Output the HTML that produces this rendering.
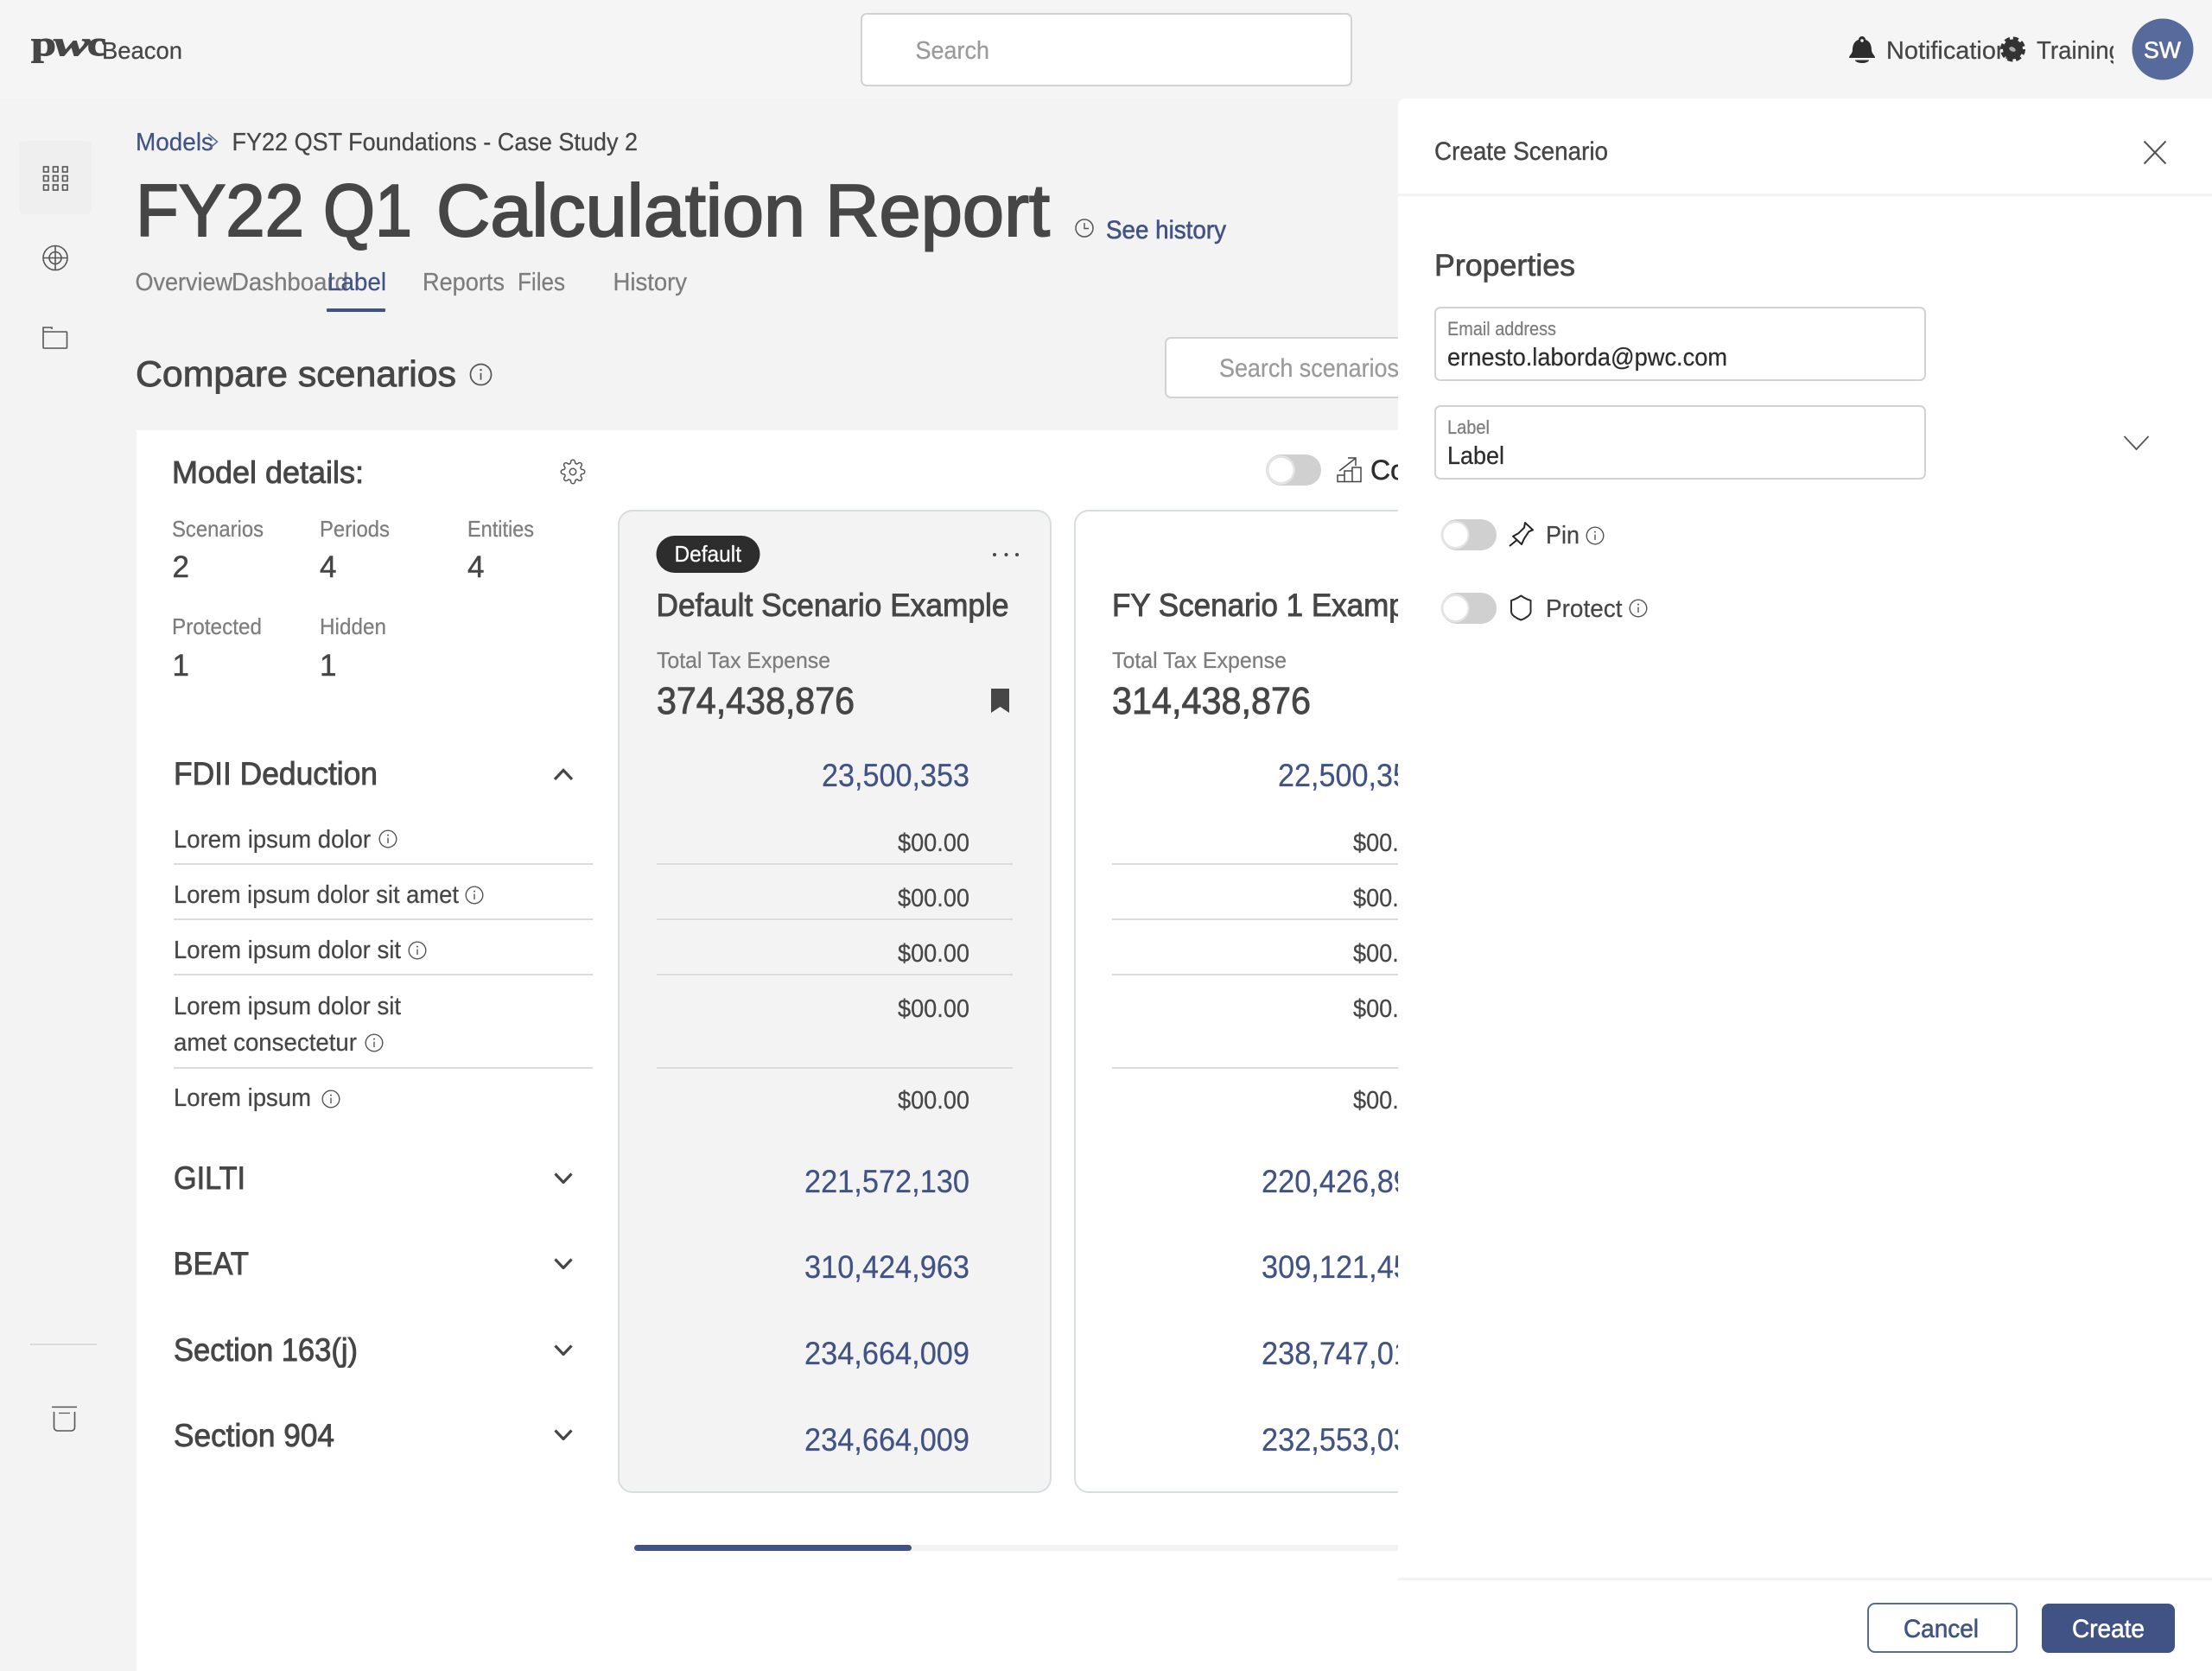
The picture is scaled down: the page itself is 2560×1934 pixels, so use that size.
<!DOCTYPE html>
<html lang="en"><head><meta charset="utf-8"><title>FY22 Q1 Calculation Report</title>
<style>
html,body{margin:0;padding:0;width:2560px;height:1934px;overflow:hidden;background:#f3f3f3}
svg{display:block}
text{font-family:"Liberation Sans",sans-serif;fill:#464646;stroke:#464646;stroke-width:.25}
.g{fill:#7d7d7d;stroke:#7d7d7d}.b{fill:#415385;stroke:#415385}.d{fill:#2d2d2d;stroke:#2d2d2d}.w{fill:#fff;stroke:#fff}.p{fill:#9a9a9a;stroke:#9a9a9a}
.m{stroke-width:.9}
.mb{stroke-width:.6}
.ln{stroke:#dcdcdc;stroke-width:2}
.ic{fill:none;stroke:#555;stroke-width:1.6}
.ch{fill:none;stroke:#464646;stroke-width:3.2}
.t{stroke-width:2}
.lg{font-family:"Liberation Serif",serif;font-weight:700;stroke-width:.9}
</style></head><body>
<svg xmlns="http://www.w3.org/2000/svg" width="2560" height="1934" viewBox="0 0 2560 1934">
<defs>
<symbol id="i" viewBox="0 0 22 22"><circle cx="11" cy="11" r="9.8" fill="none" stroke="#555" stroke-width="1.4"/><path d="M11 9.6V16" stroke="#555" stroke-width="1.4"/><circle cx="11" cy="6.6" r="1" fill="#555"/></symbol>
<symbol id="dn" viewBox="0 0 22 13"><path d="M1.5 1.5L11 11.5L20.5 1.5" fill="none" stroke="#464646" stroke-width="3.2"/></symbol>
<clipPath id="tr"><rect x="2340" y="30" width="106" height="50"/></clipPath>
</defs>

<rect width="2560" height="1934" fill="#f3f3f3"/>
<rect width="2560" height="114" fill="#f5f5f5"/>

<!-- Top bar -->
<text x="36" y="64" font-size="40" class="lg" textLength="29" lengthAdjust="spacingAndGlyphs">p</text>
<text x="62" y="64" font-size="40" class="lg" font-style="italic" textLength="42" lengthAdjust="spacingAndGlyphs">w</text>
<text x="101" y="64" font-size="40" class="lg" textLength="22" lengthAdjust="spacingAndGlyphs">c</text>
<text x="118" y="68" font-size="28" textLength="93" lengthAdjust="spacingAndGlyphs">Beacon</text>
<rect x="997" y="16" width="567" height="83" rx="6" fill="#fff" stroke="#d2d2d2" stroke-width="2"/>
<text x="1059.500" y="68" font-size="29" class="p" textLength="85.500" lengthAdjust="spacingAndGlyphs">Search</text>
<path d="M2155 42a4 4 0 0 1 4 4c6 2 7 8 7 12c0 4 4 6 4 9h-30c0-3 4-5 4-9c0-4 1-10 7-12a4 4 0 0 1 4-4z" fill="#2d2d2d"/>
<path d="M2147 69.500h16a8 3.500 0 0 1-16 0z" fill="#2d2d2d"/>
<circle cx="2155" cy="47" r="1.800" fill="#f5f5f5"/>
<text x="2183" y="68" font-size="29" textLength="143" lengthAdjust="spacingAndGlyphs">Notification</text>
<circle cx="2329.500" cy="57" r="11.500" fill="#333"/>
<circle cx="2329.500" cy="57" r="12" fill="none" stroke="#333" stroke-width="5" stroke-dasharray="5.800 3.620"/>
<ellipse cx="2329" cy="57" rx="4" ry="2.500" fill="#aaa" transform="rotate(25 2329 57)"/>
<text x="2357" y="68" font-size="29" clip-path="url(#tr)" textLength="99" lengthAdjust="spacingAndGlyphs">Training</text>
<circle cx="2503" cy="57" r="35.500" fill="#566a9b"/>
<text x="2481" y="67" font-size="27" class="w" style="stroke-width:.6" textLength="43" lengthAdjust="spacingAndGlyphs">SW</text>

<!-- Sidebar -->
<rect x="22" y="163" width="84" height="85" rx="6" fill="#efefef"/>
<g class="ic">
<rect x="50.500" y="193" width="5.500" height="6"/><rect x="61.500" y="193" width="5.500" height="6"/><rect x="72.500" y="193" width="5.500" height="6"/>
<rect x="50.500" y="203.500" width="5.500" height="6"/><rect x="61.500" y="203.500" width="5.500" height="6"/><rect x="72.500" y="203.500" width="5.500" height="6"/>
<rect x="50.500" y="214" width="5.500" height="6"/><rect x="61.500" y="214" width="5.500" height="6"/><rect x="72.500" y="214" width="5.500" height="6"/>
<circle cx="64" cy="298.500" r="14"/><circle cx="64" cy="298.500" r="7"/><path d="M50 298.500H78M64 284.500V312.500"/>
<rect x="50" y="384" width="27.500" height="19" rx="1"/><path d="M50 384V379H60V381"/>
<path d="M60 1628.500H89M62.500 1634V1652a4 4 0 0 0 4 4H82.500a4 4 0 0 0 4-4V1634"/>
<path d="M68 1635.500H81" stroke-width="1.200"/>
</g>
<line x1="35" y1="1556" x2="112" y2="1556" class="ln"/>

<!-- Header content -->
<text x="157" y="174" font-size="29" class="b" textLength="90" lengthAdjust="spacingAndGlyphs">Models</text>
<path d="M241 155L251.500 164L241 173" fill="none" stroke="#5f6f98" stroke-width="1.600"/>
<text x="268.500" y="174" font-size="29" textLength="469.500" lengthAdjust="spacingAndGlyphs">FY22 QST Foundations - Case Study 2</text>
<text x="157" y="273" font-size="85" class="t" textLength="195" lengthAdjust="spacingAndGlyphs">FY22</text>
<text x="374" y="273" font-size="85" class="t" textLength="103" lengthAdjust="spacingAndGlyphs">Q1</text>
<text x="505" y="273" font-size="85" class="t" textLength="427" lengthAdjust="spacingAndGlyphs">Calculation</text>
<text x="955" y="273" font-size="85" class="t" textLength="260" lengthAdjust="spacingAndGlyphs">Report</text>
<circle cx="1255" cy="264" r="10" fill="none" stroke="#555" stroke-width="1.500"/><path d="M1255 258V264.500H1260" fill="none" stroke="#555" stroke-width="1.400"/>
<text x="1280" y="276" font-size="30" class="b mb" textLength="139" lengthAdjust="spacingAndGlyphs">See history</text>
<text x="156.500" y="336" font-size="29" class="g" textLength="112.500" lengthAdjust="spacingAndGlyphs">Overview</text>
<text x="268" y="336" font-size="29" class="g" textLength="135" lengthAdjust="spacingAndGlyphs">Dashboard</text>
<text x="379" y="336" font-size="29" class="b" textLength="68" lengthAdjust="spacingAndGlyphs">Label</text>
<text x="489" y="336" font-size="29" class="g" textLength="95" lengthAdjust="spacingAndGlyphs">Reports</text>
<text x="599" y="336" font-size="29" class="g" textLength="55" lengthAdjust="spacingAndGlyphs">Files</text>
<text x="709.500" y="336" font-size="29" class="g" textLength="85.500" lengthAdjust="spacingAndGlyphs">History</text>
<rect x="378" y="357" width="68" height="4" rx="1" fill="#415385"/>
<text x="157" y="447" font-size="42" class="m" textLength="371" lengthAdjust="spacingAndGlyphs">Compare scenarios</text>
<use href="#i" x="543" y="420" width="27" height="27"/>
<rect x="1349" y="391" width="400" height="69" rx="6" fill="#fff" stroke="#d2d2d2" stroke-width="2"/>
<text x="1411" y="436" font-size="30" class="p" textLength="208" lengthAdjust="spacingAndGlyphs">Search scenarios</text>

<!-- Main white card -->
<rect x="158" y="498" width="1500" height="1436" fill="#fff"/>
<text x="199" y="559" font-size="36" class="m" textLength="222" lengthAdjust="spacingAndGlyphs">Model details:</text>
<g transform="translate(648 531) scale(1.250)" fill="none" stroke="#555" stroke-width="1.200"><circle cx="12" cy="12" r="3"/><path d="M19.400 15a1.650 1.650 0 0 0 .33 1.820l.06.06a2 2 0 0 1 0 2.830 2 2 0 0 1-2.830 0l-.06-.06a1.650 1.650 0 0 0-1.820-.33 1.650 1.650 0 0 0-1 1.510V21a2 2 0 0 1-2 2 2 2 0 0 1-2-2v-.09A1.650 1.650 0 0 0 9 19.400a1.650 1.650 0 0 0-1.820.33l-.06.06a2 2 0 0 1-2.830 0 2 2 0 0 1 0-2.830l.06-.06a1.650 1.650 0 0 0 .33-1.820 1.650 1.650 0 0 0-1.510-1H3a2 2 0 0 1-2-2 2 2 0 0 1 2-2h.09A1.650 1.650 0 0 0 4.600 9a1.650 1.650 0 0 0-.33-1.820l-.06-.06a2 2 0 0 1 0-2.830 2 2 0 0 1 2.830 0l.06.06a1.650 1.650 0 0 0 1.820.33H9a1.650 1.650 0 0 0 1-1.510V3a2 2 0 0 1 2-2 2 2 0 0 1 2 2v.09a1.650 1.650 0 0 0 1 1.510 1.650 1.650 0 0 0 1.820-.33l.06-.06a2 2 0 0 1 2.830 0 2 2 0 0 1 0 2.830l-.06.06a1.650 1.650 0 0 0-.33 1.820V9a1.650 1.650 0 0 0 1.510 1H21a2 2 0 0 1 2 2 2 2 0 0 1-2 2h-.09a1.650 1.650 0 0 0-1.510 1z"/></g>

<text x="199" y="621" font-size="26" class="g" textLength="106" lengthAdjust="spacingAndGlyphs">Scenarios</text>
<text x="370" y="621" font-size="26" class="g" textLength="81" lengthAdjust="spacingAndGlyphs">Periods</text>
<text x="541" y="621" font-size="26" class="g" textLength="77" lengthAdjust="spacingAndGlyphs">Entities</text>
<text x="199.500" y="668" font-size="35" style="stroke-width:.5">2</text><text x="370" y="668" font-size="35" style="stroke-width:.5">4</text><text x="541" y="668" font-size="35" style="stroke-width:.5">4</text>
<text x="199" y="734" font-size="26" class="g" textLength="104" lengthAdjust="spacingAndGlyphs">Protected</text>
<text x="370" y="734" font-size="26" class="g" textLength="77" lengthAdjust="spacingAndGlyphs">Hidden</text>
<text x="199.500" y="782" font-size="35" style="stroke-width:.5">1</text><text x="370" y="782" font-size="35" style="stroke-width:.5">1</text>

<!-- Left column rows -->
<text x="201" y="908" font-size="37" class="m" textLength="236" lengthAdjust="spacingAndGlyphs">FDII Deduction</text>
<path d="M642 902L652 891.500L662 902" class="ch"/>
<text x="201" y="981" font-size="29" textLength="228" lengthAdjust="spacingAndGlyphs">Lorem ipsum dolor</text><use href="#i" x="438" y="960" width="22" height="22"/>
<line x1="201" y1="1000" x2="686" y2="1000" class="ln"/>
<text x="201" y="1045" font-size="29" textLength="330" lengthAdjust="spacingAndGlyphs">Lorem ipsum dolor sit amet</text><use href="#i" x="538" y="1025" width="22" height="22"/>
<line x1="201" y1="1064" x2="686" y2="1064" class="ln"/>
<text x="201" y="1109" font-size="29" textLength="263" lengthAdjust="spacingAndGlyphs">Lorem ipsum dolor sit</text><use href="#i" x="472" y="1089" width="22" height="22"/>
<line x1="201" y1="1128" x2="686" y2="1128" class="ln"/>
<text x="201" y="1174" font-size="29" textLength="263" lengthAdjust="spacingAndGlyphs">Lorem ipsum dolor sit</text>
<text x="201" y="1216" font-size="29" textLength="212" lengthAdjust="spacingAndGlyphs">amet consectetur</text><use href="#i" x="422" y="1196" width="22" height="22"/>
<line x1="201" y1="1236" x2="686" y2="1236" class="ln"/>
<text x="201" y="1280" font-size="29" textLength="159" lengthAdjust="spacingAndGlyphs">Lorem ipsum</text><use href="#i" x="372" y="1261" width="22" height="22"/>

<text x="201" y="1376" font-size="37" class="m" textLength="83" lengthAdjust="spacingAndGlyphs">GILTI</text><use href="#dn" x="641" y="1357" width="22" height="13"/>
<text x="200.500" y="1475" font-size="37" class="m" textLength="87.500" lengthAdjust="spacingAndGlyphs">BEAT</text><use href="#dn" x="641" y="1456" width="22" height="13"/>
<text x="201" y="1575" font-size="37" class="m" textLength="213" lengthAdjust="spacingAndGlyphs">Section 163(j)</text><use href="#dn" x="641" y="1556" width="22" height="13"/>
<text x="201" y="1674" font-size="37" class="m" textLength="186" lengthAdjust="spacingAndGlyphs">Section 904</text><use href="#dn" x="641" y="1654" width="22" height="13"/>

<!-- Default card -->
<rect x="716" y="591" width="500" height="1136" rx="16" fill="#f3f3f3" stroke="#d8dde0" stroke-width="2"/>
<rect x="759.500" y="620" width="120" height="43" rx="21.500" fill="#2d2d2d"/>
<text x="780.500" y="650" font-size="26" class="w" textLength="77.500" lengthAdjust="spacingAndGlyphs">Default</text>
<circle cx="1151" cy="642" r="2" fill="#464646"/><circle cx="1164.500" cy="642" r="2" fill="#464646"/><circle cx="1177" cy="642" r="2" fill="#464646"/>
<text x="759.500" y="713" font-size="37" class="m" textLength="408" lengthAdjust="spacingAndGlyphs">Default Scenario Example</text>
<text x="760" y="773" font-size="26" class="g" textLength="201" lengthAdjust="spacingAndGlyphs">Total Tax Expense</text>
<text x="760" y="826" font-size="44" class="m" textLength="229" lengthAdjust="spacingAndGlyphs">374,438,876</text>
<path d="M1147 797H1168V825L1157.500 818L1147 825z" fill="#464646"/>
<text x="951" y="910" font-size="37" class="b" textLength="171" lengthAdjust="spacingAndGlyphs">23,500,353</text>
<text x="1039" y="985" font-size="29" textLength="83" lengthAdjust="spacingAndGlyphs">$00.00</text>
<line x1="760" y1="1000" x2="1172" y2="1000" class="ln"/>
<text x="1039" y="1049" font-size="29" textLength="83" lengthAdjust="spacingAndGlyphs">$00.00</text>
<line x1="760" y1="1064" x2="1172" y2="1064" class="ln"/>
<text x="1039" y="1113" font-size="29" textLength="83" lengthAdjust="spacingAndGlyphs">$00.00</text>
<line x1="760" y1="1128" x2="1172" y2="1128" class="ln"/>
<text x="1039" y="1177" font-size="29" textLength="83" lengthAdjust="spacingAndGlyphs">$00.00</text>
<line x1="760" y1="1236" x2="1172" y2="1236" class="ln"/>
<text x="1039" y="1283" font-size="29" textLength="83" lengthAdjust="spacingAndGlyphs">$00.00</text>
<text x="931" y="1380" font-size="37" class="b" textLength="191" lengthAdjust="spacingAndGlyphs">221,572,130</text>
<text x="931" y="1479" font-size="37" class="b" textLength="191" lengthAdjust="spacingAndGlyphs">310,424,963</text>
<text x="931" y="1579" font-size="37" class="b" textLength="191" lengthAdjust="spacingAndGlyphs">234,664,009</text>
<text x="931" y="1679" font-size="37" class="b" textLength="191" lengthAdjust="spacingAndGlyphs">234,664,009</text>

<!-- Second card -->
<rect x="1244" y="591" width="500" height="1136" rx="16" fill="#fff" stroke="#d8dde0" stroke-width="2"/>
<text x="1287" y="713" font-size="37" class="m" textLength="367" lengthAdjust="spacingAndGlyphs">FY Scenario 1 Example</text>
<text x="1287" y="773" font-size="26" class="g" textLength="202" lengthAdjust="spacingAndGlyphs">Total Tax Expense</text>
<text x="1287" y="826" font-size="44" class="m" textLength="230" lengthAdjust="spacingAndGlyphs">314,438,876</text>
<text x="1479" y="910" font-size="37" class="b" textLength="171" lengthAdjust="spacingAndGlyphs">22,500,353</text>
<text x="1566" y="985" font-size="29" textLength="83" lengthAdjust="spacingAndGlyphs">$00.00</text>
<line x1="1287" y1="1000" x2="1650" y2="1000" class="ln"/>
<text x="1566" y="1049" font-size="29" textLength="83" lengthAdjust="spacingAndGlyphs">$00.00</text>
<line x1="1287" y1="1064" x2="1650" y2="1064" class="ln"/>
<text x="1566" y="1113" font-size="29" textLength="83" lengthAdjust="spacingAndGlyphs">$00.00</text>
<line x1="1287" y1="1128" x2="1650" y2="1128" class="ln"/>
<text x="1566" y="1177" font-size="29" textLength="83" lengthAdjust="spacingAndGlyphs">$00.00</text>
<line x1="1287" y1="1236" x2="1650" y2="1236" class="ln"/>
<text x="1566" y="1283" font-size="29" textLength="83" lengthAdjust="spacingAndGlyphs">$00.00</text>
<text x="1460" y="1380" font-size="37" class="b" textLength="191" lengthAdjust="spacingAndGlyphs">220,426,890</text>
<text x="1460" y="1479" font-size="37" class="b" textLength="191" lengthAdjust="spacingAndGlyphs">309,121,450</text>
<text x="1460" y="1579" font-size="37" class="b" textLength="191" lengthAdjust="spacingAndGlyphs">238,747,010</text>
<text x="1460" y="1679" font-size="37" class="b" textLength="191" lengthAdjust="spacingAndGlyphs">232,553,030</text>

<!-- Compare toggle -->
<rect x="1465" y="526" width="64" height="36" rx="18" fill="#d0d0d0"/>
<circle cx="1482" cy="544" r="17" fill="#e4e4e4"/>
<circle cx="1482.500" cy="544" r="14" fill="#fff"/>
<path d="M1548 550H1556V557.500H1548zM1556 545H1565V557.500H1556zM1565 541H1575V557.500H1565zM1550 545L1568 531M1560 530H1569V539" fill="none" stroke="#464646" stroke-width="1.500"/>
<text x="1586" y="555" font-size="32" class="d" style="stroke-width:.5">Compare</text>

<!-- Scrollbar -->
<rect x="734" y="1788" width="900" height="7" rx="3" fill="#f3f3f6"/>
<rect x="734" y="1788" width="321" height="7" rx="3.500" fill="#415385"/>

<!-- Panel -->
<path d="M1618 122a8 8 0 0 1 8-8H2560V1934H1618z" fill="#fff"/>
<text x="1660" y="185" font-size="30" style="stroke-width:.4" textLength="201" lengthAdjust="spacingAndGlyphs">Create Scenario</text>
<path d="M2481.500 163.500L2506.500 189.500M2506.500 163.500L2481.500 189.500" fill="none" stroke="#555" stroke-width="2"/>
<rect x="1618" y="224" width="942" height="3" fill="#f3f3f3"/>
<text x="1660" y="319" font-size="35" class="m" style="stroke-width:.7" textLength="163" lengthAdjust="spacingAndGlyphs">Properties</text>

<rect x="1661" y="356" width="567" height="84" rx="6" fill="#fff" stroke="#d2d2d2" stroke-width="2"/>
<text x="1675" y="388" font-size="22" class="g" textLength="126" lengthAdjust="spacingAndGlyphs">Email address</text>
<text x="1675" y="423" font-size="29" class="d" textLength="324" lengthAdjust="spacingAndGlyphs">ernesto.laborda@pwc.com</text>
<rect x="1661" y="470" width="567" height="84" rx="6" fill="#fff" stroke="#d2d2d2" stroke-width="2"/>
<text x="1675" y="502" font-size="22" class="g" textLength="49" lengthAdjust="spacingAndGlyphs">Label</text>
<text x="1675" y="537" font-size="29" class="d" textLength="66" lengthAdjust="spacingAndGlyphs">Label</text>
<path d="M2458.500 505L2472.500 520L2486.500 505" fill="none" stroke="#555" stroke-width="1.800"/>

<rect x="1668" y="601" width="64" height="36" rx="18" fill="#d0d0d0"/>
<circle cx="1684" cy="619" r="16.500" fill="#e4e4e4"/>
<circle cx="1684.500" cy="619" r="14" fill="#fff"/>
<path d="M1765 605L1774 613.300L1769.300 615.300L1764 623.300L1761 630L1751 620.700L1757.300 617.300L1764 610.700ZM1755 625.500L1747 632" fill="none" stroke="#222" stroke-width="2" stroke-linejoin="round"/>
<text x="1789" y="629" font-size="29" textLength="39" lengthAdjust="spacingAndGlyphs">Pin</text>
<use href="#i" x="1835" y="609" width="22" height="22"/>

<rect x="1668" y="686" width="64" height="36" rx="18" fill="#d0d0d0"/>
<circle cx="1684" cy="704" r="16.500" fill="#e4e4e4"/>
<circle cx="1684.500" cy="704" r="14" fill="#fff"/>
<path d="M1760.300 689.500C1764 692 1768 694 1771.500 695V708C1771.500 712 1765 716 1760.300 717.500C1755.500 716 1749 712 1749 708V695C1752.500 694 1756.500 692 1760.300 689.500Z" fill="none" stroke="#2d2d2d" stroke-width="2" stroke-linejoin="round"/>
<text x="1789" y="714" font-size="29" textLength="88.500" lengthAdjust="spacingAndGlyphs">Protect</text>
<use href="#i" x="1885" y="693" width="22" height="22"/>

<rect x="1618" y="1826" width="942" height="3" fill="#f3f3f3"/>
<rect x="2162" y="1856" width="172" height="56" rx="8" fill="#fff" stroke="#566a9b" stroke-width="2"/>
<text x="2203" y="1895" font-size="30" class="b mb" textLength="87" lengthAdjust="spacingAndGlyphs">Cancel</text>
<rect x="2363" y="1856" width="154" height="57" rx="8" fill="#415385"/>
<text x="2398" y="1895" font-size="30" class="w" style="stroke-width:.6" textLength="84" lengthAdjust="spacingAndGlyphs">Create</text>
</svg>
</body></html>
